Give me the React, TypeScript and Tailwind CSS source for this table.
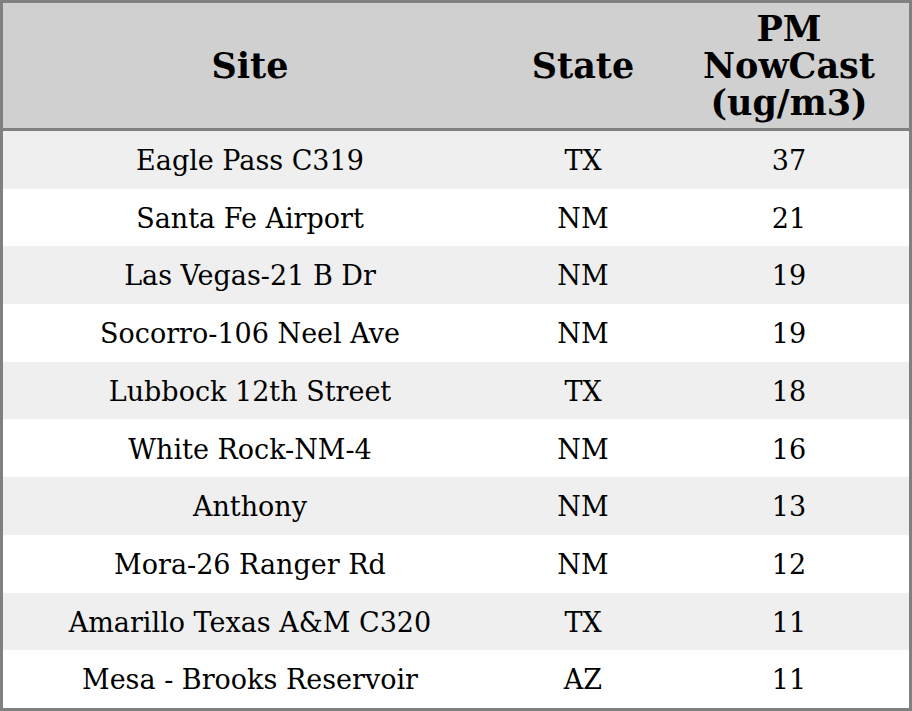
const rows = [
  ["Eagle Pass C319", "TX", "37"],
  ["Santa Fe Airport", "NM", "21"],
  ["Las Vegas-21 B Dr", "NM", "19"],
  ["Socorro-106 Neel Ave", "NM", "19"],
  ["Lubbock 12th Street", "TX", "18"],
  ["White Rock-NM-4", "NM", "16"],
  ["Anthony", "NM", "13"],
  ["Mora-26 Ranger Rd", "NM", "12"],
  ["Amarillo Texas A&M C320", "TX", "11"],
  ["Mesa - Brooks Reservoir", "AZ", "11"],
];

export default function App() {
  return (
    <div className="h-[711px] w-[912px] border-[3px] border-[#808080] bg-white font-['DejaVu_Serif',serif] text-black">
      <div className="grid h-[128px] grid-cols-[494px_172px_240px] items-center border-b-[3px] border-[#808080] bg-[#d0d0d0] text-center text-[35px] font-bold leading-[37px]">
        <div>Site</div>
        <div>State</div>
        <div>
          PM
          <br />
          NowCast
          <br />
          (ug/m3)
        </div>
      </div>
      {rows.map((r, i) => (
        <div
          key={i}
          className={
            "grid h-[57.7px] grid-cols-[494px_172px_240px] items-center pt-[3px] text-center text-[27px] " +
            (i % 2 === 0 ? "bg-[#efefef]" : "bg-white")
          }
        >
          <div>{r[0]}</div>
          <div>{r[1]}</div>
          <div>{r[2]}</div>
        </div>
      ))}
    </div>
  );
}
